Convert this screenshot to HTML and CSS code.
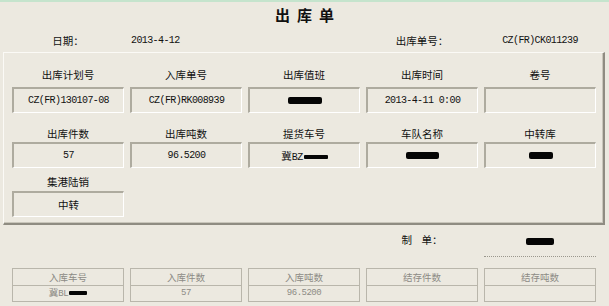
FILE: index.html
```html
<!DOCTYPE html>
<html lang="zh-CN">
<head>
<meta charset="utf-8">
<title>出库单</title>
<link rel="stylesheet" href="styles.css">
</head>
<body>
<div class="topline"></div>
<h1 class="title">出 库 单</h1>
<div class="meta cols">
  <span class="c">日期：</span>
  <span class="mono left">2013-4-12</span>
  <span></span>
  <span class="c">出库单号：</span>
  <span class="mono c">CZ(FR)CK011239</span>
</div>
<div class="panel">
  <div class="cols grid">
    <div class="field"><div class="label">出库计划号</div><div class="box mono">CZ(FR)130107-08</div></div>
    <div class="field"><div class="label">入库单号</div><div class="box mono">CZ(FR)RK008939</div></div>
    <div class="field"><div class="label">出库值班</div><div class="box"><span class="blob w34"></span></div></div>
    <div class="field"><div class="label">出库时间</div><div class="box mono">2013-4-11 0:00</div></div>
    <div class="field"><div class="label">卷号</div><div class="box"></div></div>
    <div class="field row2"><div class="label">出库件数</div><div class="box mono">57</div></div>
    <div class="field row2"><div class="label">出库吨数</div><div class="box mono">96.5200</div></div>
    <div class="field row2"><div class="label">提货车号</div><div class="box"><span class="inl">冀<span class="mono">BZ</span><span class="blob thin w24"></span></span></div></div>
    <div class="field row2"><div class="label">车队名称</div><div class="box"><span class="blob w33"></span></div></div>
    <div class="field row2"><div class="label">中转库</div><div class="box"><span class="blob w24"></span></div></div>
  </div>
  <div class="cols grid row3">
    <div class="field"><div class="label">集港陆销</div><div class="box">中转</div></div>
  </div>
</div>
<div class="cols sign">
  <span></span><span></span><span></span>
  <span class="c">制&nbsp;&nbsp;&nbsp;&nbsp;单：</span>
  <span class="c signer"><span class="blob w28"></span></span>
</div>
<div class="cols stock">
  <div class="cell"><div class="head">入库车号</div><div class="val"><span class="inl">冀<span class="small-mono">BL</span><span class="blob thin w18"></span></span></div></div>
  <div class="cell"><div class="head">入库件数</div><div class="val small-mono">57</div></div>
  <div class="cell"><div class="head">入库吨数</div><div class="val small-mono">96.5200</div></div>
  <div class="cell"><div class="head">结存件数</div><div class="val"></div></div>
  <div class="cell"><div class="head">结存吨数</div><div class="val"></div></div>
</div>
</body>
</html>
```

FILE: styles.css
```css
html, body {
  margin: 0;
  padding: 0;
}
body {
  background: #ece9e0;
  font-family: "Noto Sans CJK SC", "Noto Sans", sans-serif;
  font-size: 10.5px;
  color: #111;
  width: 609px;
  height: 306px;
  overflow: hidden;
}
.topline {
  height: 2px;
  background: #c5e4cd;
}
.title {
  margin: 0;
  height: 26px;
  line-height: 26px;
  text-align: center;
  font-size: 15px;
  font-weight: bold;
  letter-spacing: 1.8px;
  padding-left: 2px;
}
.cols {
  display: grid;
  grid-template-columns: repeat(5, 112px);
  column-gap: 6px;
  padding-left: 12px;
}
.c { text-align: center; }
.left { text-align: left; padding-left: 1px; }
.mono {
  font-family: "Liberation Mono", monospace;
  font-size: 10px;
  letter-spacing: -0.6px;
}
.meta {
  height: 24px;
  line-height: 25px;
}
.panel {
  margin-left: 3px;
  width: 592px;
  border-top: 1px solid #fbfaf6;
  border-left: 1px solid #fbfaf6;
  border-right: 2px solid #8f8c82;
  border-bottom: 2px solid #8f8c82;
  padding: 11px 7px 6px 0;
  box-shadow: inset -1px -1px 0 #c9c6bb;
}
.panel .cols {
  padding-left: 8px;
}
.grid {
  row-gap: 9px;
}
.row3 {
  margin-top: 3px;
}
.label {
  height: 23px;
  line-height: 22px;
  text-align: center;
}
.row2 .label, .row3 .label {
  height: 20px;
  line-height: 23px;
}
.row3 .label {
  line-height: 21px;
}
.box {
  box-sizing: border-box;
  height: 26px;
  border-top: 2px solid #aeab9f;
  border-left: 2px solid #aeab9f;
  border-right: 1px solid #ffffff;
  border-bottom: 1px solid #ffffff;
  display: flex;
  align-items: center;
  justify-content: center;
  white-space: nowrap;
}
.inl {
  display: inline-block;
  white-space: nowrap;
}
.inl .mono, .inl .small-mono {
  vertical-align: baseline;
}
.blob {
  display: inline-block;
  height: 7px;
  background: #050505;
  border-radius: 2px;
  vertical-align: middle;
}
.inl .blob {
  margin-left: 1px;
  vertical-align: 1px;
}
.blob.thin { height: 4px; border-radius: 1px; }
.w18 { width: 18px; }
.w24 { width: 24px; }
.w28 { width: 28px; }
.w33 { width: 33px; }
.w34 { width: 34px; }
.sign {
  height: 32px;
  margin-top: 0;
}
.sign > span {
  padding-top: 4px;
  line-height: 22px;
}
.sign .signer {
  box-sizing: border-box;
  height: 32px;
  border-bottom: 1px dotted #9a978d;
}
.stock {
  margin-top: 11px;
}
.cell {
  border: 1px solid #b9b6ab;
  color: #8d8b85;
  font-size: 9.5px;
  text-align: center;
}
.head {
  height: 16px;
  line-height: 16px;
  border-bottom: 1px solid #b9b6ab;
}
.val {
  height: 15px;
  line-height: 15px;
  display: flex;
  align-items: center;
  justify-content: center;
}
.small-mono {
  font-family: "Liberation Mono", monospace;
  font-size: 9px;
  letter-spacing: -0.5px;
}
```
